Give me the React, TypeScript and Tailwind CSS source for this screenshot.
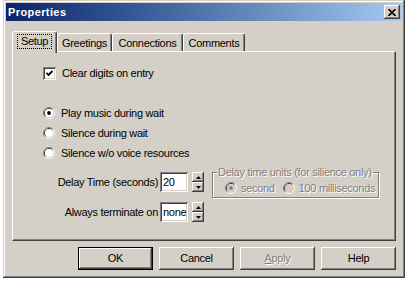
import React from "react";

const raised =
  "shadow-[inset_-1px_-1px_#404040,inset_1px_1px_#ffffff,inset_-2px_-2px_#808080,inset_2px_2px_#d4d0c8]";
const sunken =
  "shadow-[inset_1px_1px_#808080,inset_-1px_-1px_#ffffff,inset_2px_2px_#404040,inset_-2px_-2px_#d4d0c8]";

const tabs = [
  { label: "Setup", w: "w-[45px]", active: true },
  { label: "Greetings", w: "w-[55px]", active: false },
  { label: "Connections", w: "w-[71px]", active: false },
  { label: "Comments", w: "w-[62px]", active: false },
];

function Radio({ checked, disabled }: { checked?: boolean; disabled?: boolean }) {
  return (
    <svg width="12" height="12" viewBox="0 0 12 12" className="shrink-0">
      <path d="M2.11 9.89 A5.5 5.5 0 0 1 9.89 2.11" fill="none" stroke="#808080" />
      <path d="M9.89 2.11 A5.5 5.5 0 0 1 2.11 9.89" fill="none" stroke="#ffffff" />
      <path d="M2.82 9.18 A4.5 4.5 0 0 1 9.18 2.82" fill="none" stroke="#404040" />
      <path d="M9.18 2.82 A4.5 4.5 0 0 1 2.82 9.18" fill="none" stroke="#d4d0c8" />
      <circle cx="6" cy="6" r="4" fill={disabled ? "#d4d0c8" : "#ffffff"} />
      {checked && <circle cx="6" cy="6" r="1.9" fill={disabled ? "#808080" : "#000000"} />}
    </svg>
  );
}

function Spinner() {
  return (
    <div className="ml-[4px] flex flex-col">
      <div className={`flex h-[10px] w-[12px] items-center justify-center bg-[#d4d0c8] ${raised}`}>
        <svg width="5" height="3" viewBox="0 0 5 3">
          <path d="M2.5 0 L5 3 L0 3 Z" fill="#000" />
        </svg>
      </div>
      <div className={`flex h-[10px] w-[12px] items-center justify-center bg-[#d4d0c8] ${raised}`}>
        <svg width="5" height="3" viewBox="0 0 5 3">
          <path d="M0 0 L5 0 L2.5 3 Z" fill="#000" />
        </svg>
      </div>
    </div>
  );
}

function Field({ label, value }: { label: string; value: string }) {
  return (
    <div className="flex h-[20px] items-center">
      <span className="mr-[2px]">{label}</span>
      <div className={`flex h-[20px] w-[28px] items-center bg-white pl-[3px] ${sunken}`}>{value}</div>
      <Spinner />
    </div>
  );
}

function Button({ label, primary, disabled }: { label: string; primary?: boolean; disabled?: boolean }) {
  return (
    <div
      className={`flex h-[23px] w-[75px] items-center justify-center bg-[#d4d0c8] ${raised} ${
        primary ? "border border-black" : ""
      }`}
    >
      {disabled ? (
        <span className="text-[#808080] [text-shadow:1px_1px_0_#ffffff]">
          <span className="underline">A</span>pply
        </span>
      ) : (
        label
      )}
    </div>
  );
}

export default function App() {
  return (
    <div className="h-[281px] w-[408px] bg-white font-['Liberation_Sans',Arial,sans-serif] text-[11px] tracking-[-0.3px] text-black">
      <div
        className={`ml-[3px] flex h-[278px] w-[402px] flex-col bg-[#d4d0c8] p-[3px] shadow-[inset_-1px_-1px_#404040,inset_1px_1px_#d4d0c8,inset_-2px_-2px_#808080,inset_2px_2px_#ffffff]`}
      >
        {/* title bar */}
        <div className="flex h-[18px] items-center justify-between bg-gradient-to-r from-[#0a246a] to-[#a6caf0] pl-[2px] pr-[2px]">
          <span className="text-[11px] font-bold tracking-[0.4px] text-white">Properties</span>
          <div className={`flex h-[14px] w-[16px] items-center justify-center bg-[#d4d0c8] ${raised}`}>
            <svg width="8" height="7" viewBox="0 0 8 7">
              <path d="M0.5 0 L7.5 7 M7.5 0 L0.5 7" stroke="#000" strokeWidth="1.6" />
            </svg>
          </div>
        </div>

        {/* tabs */}
        <div className="mx-[6px] mt-[10px] flex h-[20px] items-end">
          {tabs.map((t) => (
            <div
              key={t.label}
              className={`${t.w} flex justify-center rounded-t-[3px] border-l border-r border-t border-l-white border-r-[#404040] border-t-white bg-[#d4d0c8] shadow-[inset_-1px_0_#808080] ${
                t.active ? "relative z-10 -mb-[2px] h-[22px] pt-[2px]" : "h-[18px] pt-[2px]"
              }`}
            >
              {t.active ? (
                <span className="h-[15px] border border-dotted border-black px-[3px] leading-[13px]">{t.label}</span>
              ) : (
                <span className="leading-[14px]">{t.label}</span>
              )}
            </div>
          ))}
        </div>

        {/* panel */}
        <div className="mx-[6px] h-[190px] border border-b-[#404040] border-l-white border-r-[#404040] border-t-white pt-[15px] shadow-[inset_-1px_-1px_#808080]">
          <div className="pl-[30px]">
            <div className="flex h-[13px] items-center">
              <div className={`flex h-[13px] w-[13px] items-center justify-center bg-white ${sunken}`}>
                <svg width="7" height="7" viewBox="0 0 7 7">
                  <path d="M0.5 3 L2.5 5 L6.5 1" fill="none" stroke="#000" strokeWidth="1.8" />
                </svg>
              </div>
              <span className="ml-[6px]">Clear digits on entry</span>
            </div>
            <div className="mt-[23px] flex flex-col">
              <div className="flex h-[20px] items-center">
                <Radio checked />
                <span className="ml-[6px]">Play music during wait</span>
              </div>
              <div className="flex h-[20px] items-center">
                <Radio />
                <span className="ml-[6px]">Silence during wait</span>
              </div>
              <div className="flex h-[20px] items-center">
                <Radio />
                <span className="ml-[6px]">Silence w/o voice resources</span>
              </div>
            </div>
          </div>

          <div className="mt-[9px] flex">
            <div className="flex w-[191px] flex-col items-end gap-[10px]">
              <Field label="Delay Time (seconds)" value="20" />
              <Field label="Always terminate on" value="none" />
            </div>
            <div className="relative ml-[8px] h-[26px] w-[167px] border border-[#808080] shadow-[1px_1px_0_#ffffff,inset_1px_1px_0_#ffffff]">
              <span className="absolute -top-[8px] left-[4px] bg-[#d4d0c8] px-[1px] leading-[14px] text-[#808080] [text-shadow:1px_1px_0_#ffffff]">
                Delay time units (for silience only)
              </span>
              <div className="flex h-full items-center pl-[12px] pt-[6px] text-[#808080] [text-shadow:1px_1px_0_#ffffff]">
                <Radio checked disabled />
                <span className="ml-[4px]">second</span>
                <span className="ml-[8px]">
                  <Radio disabled />
                </span>
                <span className="ml-[4px]">100 milliseconds</span>
              </div>
            </div>
          </div>
        </div>

        {/* buttons */}
        <div className="mr-[6px] mt-[6px] flex justify-end gap-[6px]">
          <Button label="OK" primary />
          <Button label="Cancel" />
          <Button label="Apply" disabled />
          <Button label="Help" />
        </div>
      </div>
    </div>
  );
}
